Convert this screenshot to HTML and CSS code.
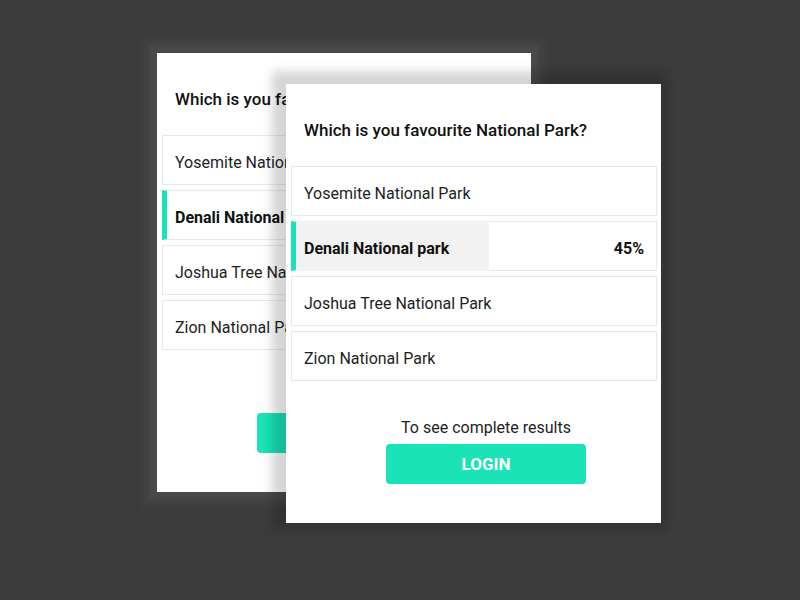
FILE: index.html
```html
<!DOCTYPE html>
<html>
<head>
<meta charset="utf-8">
<link rel="stylesheet" href="styles.css">
</head>
<body>
<div class="stage">
  <div class="card card-back">
    <div class="title">Which is you favourite National Park?</div>
    <div class="options">
      <div class="option">Yosemite National Park</div>
      <div class="option selected"><span class="label">Denali National park</span></div>
      <div class="option">Joshua Tree National Park</div>
      <div class="option">Zion National Park</div>
    </div>
    <div class="footer">
      <div class="note hidden">To see complete results</div>
      <button class="btn">VOTE</button>
    </div>
  </div>
  <div class="card card-front">
    <div class="title">Which is you favourite National Park?</div>
    <div class="options">
      <div class="option">Yosemite National Park</div>
      <div class="option selected">
        <div class="fill" style="width:53.5%"></div>
        <span class="label">Denali National park</span>
        <span class="pct">45%</span>
      </div>
      <div class="option">Joshua Tree National Park</div>
      <div class="option">Zion National Park</div>
    </div>
    <div class="footer">
      <div class="note">To see complete results</div>
      <button class="btn">LOGIN</button>
    </div>
  </div>
</div>
</body>
</html>
```

FILE: styles.css
```css
html, body {
  margin: 0;
  padding: 0;
  background: #3c3c3c;
  font-family: Roboto, "Liberation Sans", sans-serif;
}
.stage {
  position: relative;
  width: 800px;
  height: 600px;
  overflow: hidden;
}
.card {
  position: absolute;
  width: 375px;
  height: 439px;
  box-sizing: border-box;
  background: #fff;
  padding: 0 4px 0 5px;
  display: flex;
  flex-direction: column;
}
.card-back {
  left: 157px;
  top: 53px;
  width: 374px;
  box-shadow: 0 0 4px 8px rgba(255,255,255,0.045), 0 0 6px 16px rgba(255,255,255,0.03);
}
.card-front {
  left: 286px;
  top: 84px;
  box-shadow: -4px -3px 10px 10px rgba(0,0,0,0.17);
}
.title {
  padding: 35px 13px 0;
  line-height: 22px;
  height: 47px;
  font-size: 17px;
  font-weight: 500;
  color: #111;
}
.options {
  display: flex;
  flex-direction: column;
  gap: 5px;
}
.option {
  position: relative;
  height: 50px;
  box-sizing: border-box;
  border: 1px solid #e8e8e8;
  padding: 5px 12px 0;
  display: flex;
  align-items: center;
  justify-content: space-between;
  font-size: 16px;
  color: #1e1e1e;
}
.option.selected {
  border-left: 5px solid #19e3b7;
  padding-left: 8px;
  font-weight: 700;
  color: #111;
}
.fill {
  position: absolute;
  left: 0;
  top: -1px;
  bottom: -1px;
  background: #f2f2f2;
}
.label, .pct {
  position: relative;
}
.footer {
  margin-top: 37px;
  padding-left: 24px;
  display: flex;
  flex-direction: column;
  align-items: center;
  gap: 6px;
}
.note {
  font-size: 16px;
  line-height: 20px;
  color: #222;
}
.hidden {
  visibility: hidden;
}
.btn {
  width: 200px;
  height: 40px;
  border: none;
  border-radius: 4px;
  background: #19e3b7;
  color: #fff;
  font-family: Roboto, "Liberation Sans", sans-serif;
  font-size: 17px;
  font-weight: 700;
  padding: 0;
}
```
